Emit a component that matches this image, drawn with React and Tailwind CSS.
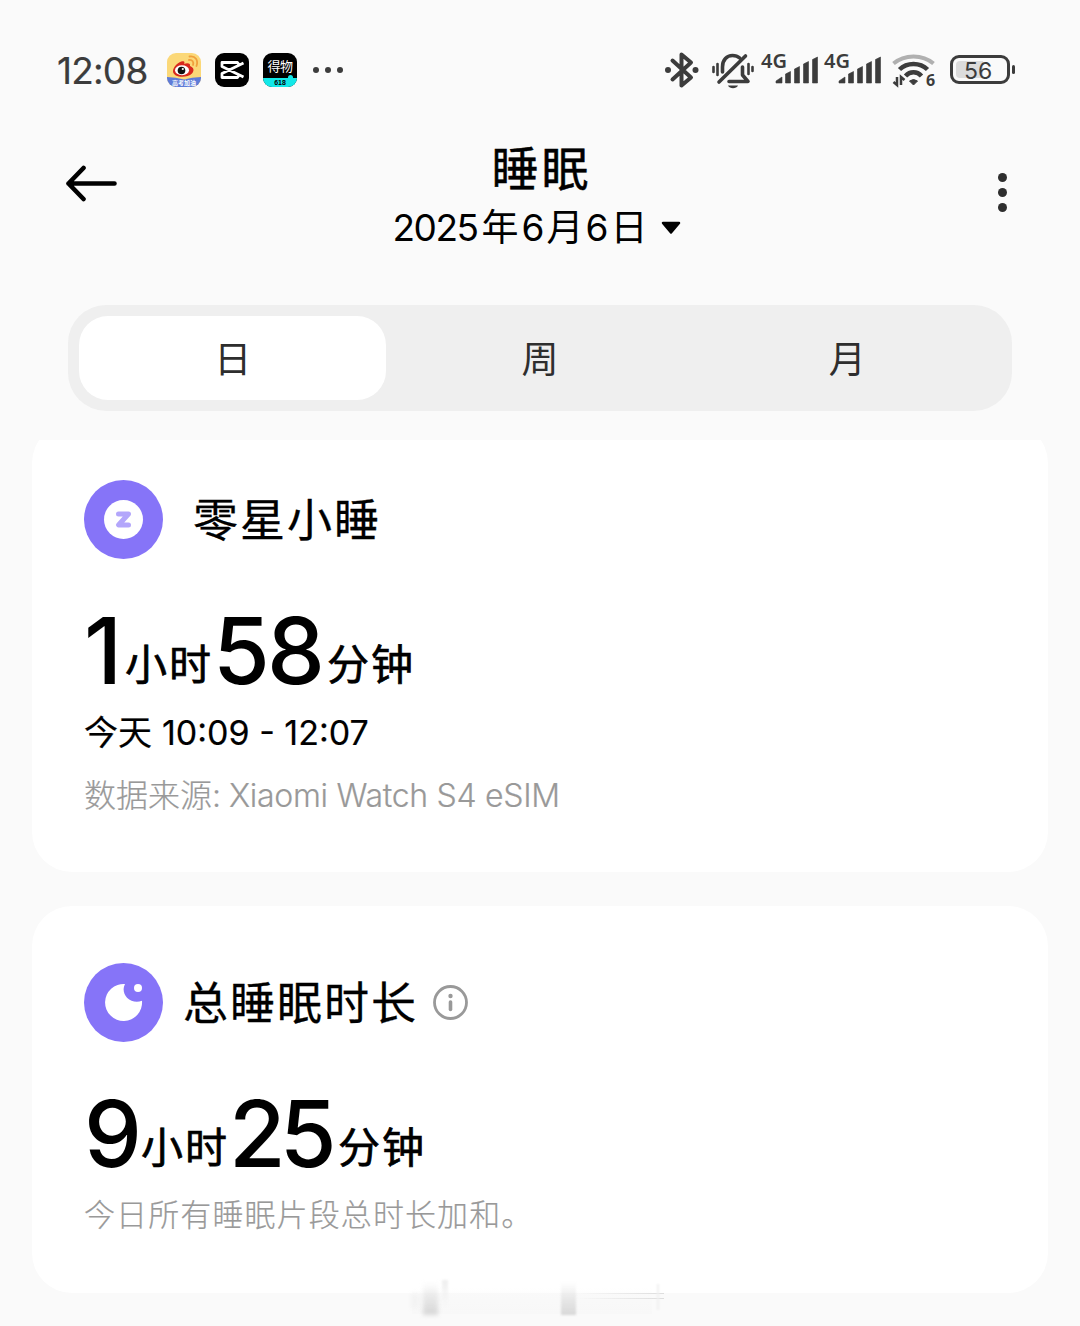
import clsx from "clsx";

const tabs = [
  { key: "day", label: "日" },
  { key: "week", label: "周" },
  { key: "month", label: "月" },
];

function BluetoothIcon() {
  return (
    <svg width="36" height="40" viewBox="0 0 36 40" className="shrink-0" fill="none" stroke="#3c3c3c" strokeWidth="4" strokeLinecap="round" strokeLinejoin="round">
      <path d="M8.500 10.500 27 27.500 17.500 35.500V4.500L27 12.500 8.500 29.500" />
      <circle cx="4" cy="20" r="3" fill="#3c3c3c" stroke="none" />
      <circle cx="31.500" cy="20" r="3" fill="#3c3c3c" stroke="none" />
    </svg>
  );
}

function MutedBellIcon() {
  return (
    <svg width="44" height="40" viewBox="0 0 44 40" className="shrink-0" fill="none" stroke="#3c3c3c" strokeWidth="3.600" strokeLinecap="round" strokeLinejoin="round">
      <path d="M11.500 22V17C11.500 9.500 16 5.500 21.500 5.500C24.500 5.500 27 6.500 28.700 8" />
      <path d="M31.500 17V25L37 31.500H18" />
      <path d="M34.500 6 8 32" />
      <path d="M17 35.500H27C25.500 39 18.500 39 17 35.500Z" fill="#3c3c3c" stroke="none" />
      <path d="M2.500 17V22M6.500 14V25M37.500 14V24M41.500 17V21" strokeWidth="2.600" />
    </svg>
  );
}

function Signal() {
  return (
    <div className="relative h-10 w-[57px] shrink-0">
      <svg width="57" height="40" viewBox="0 0 57 40" fill="#3c3c3c">
        <path d="M15 33V31L21 27V33Z M24.500 33V24L29.500 21.500V33Z M33.500 33V19L38.500 16.500V33Z M42.500 33V14L47.500 11.500V33Z M51.500 33V9.500L56.500 7V33Z" stroke="#3c3c3c" strokeWidth=".6" strokeLinejoin="round" />
      </svg>
      <span className="absolute -top-px left-0 font-['Noto_Sans'] text-[20px] font-semibold leading-[24px]">4G</span>
    </div>
  );
}

function WifiIcon() {
  return (
    <div className="relative h-10 w-[44px] shrink-0">
      <svg width="44" height="40" viewBox="0 0 44 40" fill="none">
        <path d="M1.500 13.500C12.500 4 30.500 4 41.500 13.500" stroke="#b0b0b0" strokeWidth="4" />
        <path d="M7.500 19.500C15 12 28 12 35.500 19.500" stroke="#3c3c3c" strokeWidth="4.500" />
        <path d="M13.500 26C18 21 25 21 29.500 26" stroke="#3c3c3c" strokeWidth="4.500" />
        <path d="M17.500 31Q21.500 28 25.500 31L21.500 35Z" fill="#3c3c3c" stroke="#3c3c3c" />
        <path d="M5 27V35L1.500 32M9 35V27L12.500 30" stroke="#3c3c3c" strokeWidth="2.500" />
      </svg>
      <span className="absolute left-[34px] top-[22px] font-['Noto_Sans'] text-[16px] font-bold leading-[16px]">6</span>
    </div>
  );
}

function Battery() {
  return (
    <div className="flex shrink-0 items-center gap-[2px]">
      <div className="flex h-[29px] w-[60px] rounded-[9px] border-[3px] border-[#3c3c3c] p-[3px]">
        <div className="h-full w-[27px] rounded-l-[4px] bg-[#dcdcdc]">
          <span className="ml-[8px] block w-[36px] pt-px text-[23px] leading-[18px]">56</span>
        </div>
      </div>
      <div className="h-[9px] w-[3px] rounded-full bg-[#3c3c3c]" />
    </div>
  );
}

function WeiboIcon() {
  return (
    <div className="relative size-[34px] overflow-hidden rounded-[9px] bg-[#fbd878]">
      <svg width="34" height="34" viewBox="0 0 34 34" fill="none">
        <path d="M0 24Q9 24 17 26.500Q25 24 34 24V34H0Z" fill="#5e7bd8" />
        <path d="M6 18C6 13 14 6.500 17 8.500C18 9.500 17 11 17 11C20 9.500 24 10 23 13C27 14.500 27.500 17.500 25 20.500C20 25.500 6 25 6 18Z" fill="#d8281d" />
        <ellipse cx="15" cy="17.300" rx="7" ry="5" fill="#fff" />
        <circle cx="14.500" cy="17.500" r="3.800" fill="#111" />
        <circle cx="15.800" cy="16" r="1.100" fill="#fff" />
        <path d="M22 7C25.500 6.500 27 9 26 12M22.500 3.500C28.500 2.500 31.500 7.500 29.500 13" stroke="#f0a03c" strokeWidth="1.800" strokeLinecap="round" />
      </svg>
      <span className="absolute left-[5px] top-[26px] w-[30px] text-[6px] font-bold leading-[7px] text-white">高考加油</span>
    </div>
  );
}

function CapCutIcon() {
  return (
    <svg width="34" height="34" viewBox="0 0 34 34" fill="none">
      <rect width="34" height="34" rx="9" fill="#000" />
      <path d="M28.500 10 7 20.500V24.500H22.500L24 22.500M28.500 24 7 13.500V9.500H22.500L24 11.500" stroke="#fff" strokeWidth="2.800" strokeLinejoin="round" />
    </svg>
  );
}

function DewuIcon() {
  return (
    <div className="relative size-[34px] overflow-hidden rounded-[9px] bg-black text-center">
      <span className="block pt-[5px] text-[13px] leading-[17px] tracking-[-0.5px] text-white">得物</span>
      <div className="absolute bottom-0 left-0 h-[9px] w-full bg-[#12e8e8] font-['Liberation_Sans'] text-[7px] font-bold leading-[9px] text-black">618</div>
      <div className="absolute right-[4px] top-[22px] h-[5px] w-[5px] rounded-full bg-[#12e8e8]" />
    </div>
  );
}

function StatusBar() {
  return (
    <div className="flex h-[92px] items-end justify-between pl-[57px] pr-[65px] text-[#3c3c3c]">
      <div className="flex h-[44px] items-center">
        <span className="w-[110px] pt-[2px] text-[37px] leading-[44px] tracking-[-0.8px] [-webkit-text-stroke:0.2px_#3c3c3c]">12:08</span>
        <div className="flex gap-[14px]">
          <WeiboIcon />
          <CapCutIcon />
          <DewuIcon />
        </div>
        <div className="ml-[16px] flex gap-[6px]">
          <i className="size-[6px] rounded-full bg-[#3c3c3c]" />
          <i className="size-[6px] rounded-full bg-[#3c3c3c]" />
          <i className="size-[6px] rounded-full bg-[#3c3c3c]" />
        </div>
      </div>
      <div className="flex h-[45px] items-center">
        <BluetoothIcon />
        <div className="ml-[11px] mr-[6px] flex"><MutedBellIcon /></div>
        <div className="mr-[11px] flex gap-[6px]">
          <Signal />
          <Signal />
        </div>
        <WifiIcon />
        <div className="ml-[14px]"><Battery /></div>
      </div>
    </div>
  );
}

function Header() {
  return (
    <header className="flex h-[213px] justify-between px-[66px] pt-[48px]">
      <button className="mt-[23px] h-[40px] w-[60px]">
        <svg width="52" height="38" viewBox="0 0 52 38" fill="none" stroke="#000" strokeWidth="4.600" strokeLinecap="round" strokeLinejoin="round">
          <path d="M17.500 4 2.500 19.500 17.500 35M2.500 19.500H48.500" />
        </svg>
      </button>
      <div className="flex flex-col items-center">
        <h1 className="pl-[3px] text-[47px] leading-[58px] tracking-[3px] [-webkit-text-stroke:0.5px_#000]">睡眠</h1>
        <div className="flex h-[60px] items-center pr-[7px] text-[37px]">
          <span className="w-[89px] tracking-[-1.500px]">2025</span>
          <span className="w-[40px]">年</span>
          <span className="w-[25px]">6</span>
          <span className="w-[39px]">月</span>
          <span className="w-[25px]">6</span>
          <span className="w-[50px]">日</span>
          <svg width="20" height="14" viewBox="0 0 20 14">
            <path d="M2 2H18L10 11.500Z" stroke="#000" strokeWidth="2.500" strokeLinejoin="round" />
          </svg>
        </div>
      </div>
      <button className="mt-[33px] flex h-[40px] w-[60px] flex-col items-end gap-[6px] pr-[7px]">
        <i className="size-[9px] rounded-full bg-[#2e2e2e]" />
        <i className="size-[9px] rounded-full bg-[#2e2e2e]" />
        <i className="size-[9px] rounded-full bg-[#2e2e2e]" />
      </button>
    </header>
  );
}

function Duration({ hours, minutes, hoursClass, minutesClass }) {
  return (
    <div className="flex h-[96px] items-end">
      <span className={clsx("text-[92px] font-medium leading-[96px]", hoursClass)}>{hours}</span>
      <span className="text-[42px] leading-[69px] tracking-[2px] [-webkit-text-stroke:0.7px_#000]">小时</span>
      <span className={clsx("text-[92px] font-medium leading-[96px]", minutesClass)}>{minutes}</span>
      <span className="text-[42px] leading-[69px] tracking-[2px] [-webkit-text-stroke:0.7px_#000]">分钟</span>
    </div>
  );
}

export default function App() {
  const active = "day";

  return (
    <div className="relative h-[1326px] w-[1080px] overflow-hidden bg-[#fafafa] font-[Inter,'Noto_Sans_CJK_SC',sans-serif] text-black">
      <StatusBar />
      <Header />

      <nav className="mx-[68px] grid h-[106px] grid-cols-3 rounded-[38px] bg-[#efefef] p-[11px]">
        {tabs.map((tab) => (
          <button
            key={tab.key}
            className={clsx(
              "rounded-[29px] pt-[4px] text-[37px] leading-[80px] text-[#2e2e2e]",
              tab.key === active && "bg-white"
            )}
          >
            {tab.label}
          </button>
        ))}
      </nav>

      {/* scroll area, first card is partly scrolled under the tabs */}
      <main className="mt-[29px] h-[886px] overflow-hidden px-[32px]">
        <section className="-mt-[17px] h-[449px] rounded-[40px] bg-white px-[52px] pt-[57px]">
          <div className="flex items-center">
            <svg width="79" height="79" viewBox="0 0 79 79">
              <circle cx="39.500" cy="39.500" r="39.500" fill="#8674f8" />
              <circle cx="39.500" cy="39.500" r="19.500" fill="#fff" />
              <path d="M34.500 34H44.500L34.500 45H44.500" fill="none" stroke="#b3a6fb" strokeWidth="5" strokeLinecap="round" strokeLinejoin="round" />
            </svg>
            <h2 className="ml-[30px] pt-[3px] text-[45px] leading-[60px] tracking-[2px] [-webkit-text-stroke:0.3px_#000]">零星小睡</h2>
          </div>
          <div className="mt-[44px]">
            <Duration hours="1" minutes="58" hoursClass="w-[41px]" minutesClass="w-[114px] tracking-[-3px]" />
          </div>
          <p className="mt-[8px] flex text-[34px] leading-[52px] [-webkit-text-stroke:0.2px_#000]">
            <span className="w-[78px]">今天</span>
            <span>10:09 - 12:07</span>
          </p>
          <p className="mt-[11px] flex text-[32px] font-light leading-[52px] text-[#999] [-webkit-text-stroke:0.2px_#999]">
            <span className="w-[145px]">数据来源:</span>
            <span className="tracking-[-0.3px]">Xiaomi Watch S4 eSIM</span>
          </p>
        </section>

        <section className="mt-[34px] h-[387px] rounded-[40px] bg-white px-[52px] pt-[57px]">
          <div className="flex items-center">
            <svg width="79" height="79" viewBox="0 0 79 79">
              <circle cx="39.500" cy="39.500" r="39.500" fill="#8674f8" />
              <path d="M41 21C38.500 25.500 39.500 31 43 34.700C47 38.500 52.500 39.700 58 37.800A18.500 18.500 0 1 1 41 21Z" fill="#fff" />
              <circle cx="54" cy="25" r="4" fill="#fff" />
            </svg>
            <h2 className="ml-[20px] pt-[3px] text-[45px] leading-[60px] tracking-[2px] [-webkit-text-stroke:0.3px_#000]">总睡眠时长</h2>
            <svg width="35" height="35" viewBox="0 0 35 35" className="ml-[15px]">
              <circle cx="17.500" cy="17.500" r="16" fill="none" stroke="#999" strokeWidth="2.800" />
              <circle cx="17.500" cy="11" r="2.200" fill="#999" />
              <path d="M17.500 17V24.500" stroke="#999" strokeWidth="3.600" strokeLinecap="round" />
            </svg>
          </div>
          <div className="mt-[44px]">
            <Duration hours="9" minutes="25" hoursClass="w-[57px]" minutesClass="w-[109px] tracking-[-6px]" />
          </div>
          <p className="mt-[7px] text-[31px] font-light leading-[52px] tracking-[1.1px] text-[#999] [-webkit-text-stroke:0.2px_#999]">今日所有睡眠片段总时长加和。</p>
        </section>
      </main>

      {/* faint smudge over the bottom edge of the last card */}
      <div className="pointer-events-none absolute left-[412px] top-[1278px] h-[40px] w-[252px]">
        <div className="absolute left-0 top-[10px] h-[26px] w-[240px] bg-gradient-to-b from-transparent to-[#f8f8f8]" />
        <div className="absolute left-0 top-[16px] h-[14px] w-[6px] bg-[#f1f1f1] blur-[2px]" />
        <div className="absolute left-[11px] top-[4px] h-[33px] w-[15px] bg-gradient-to-b from-transparent to-[#d6d6d6] blur-[2px]" />
        <div className="absolute left-[30px] top-[2px] h-[28px] w-[6px] bg-gradient-to-b from-[#eeeeee] to-transparent blur-[1px]" />
        <div className="absolute left-[149px] top-[4px] h-[33px] w-[15px] bg-gradient-to-b from-transparent to-[#d8d8d8] blur-[1px]" />
        <div className="absolute left-[164px] top-[15px] h-px w-[88px] bg-gradient-to-r from-transparent to-[#dddddd]" />
        <div className="absolute left-[164px] top-[20px] h-px w-[88px] bg-gradient-to-r from-transparent to-[#dddddd]" />
        <div className="absolute left-[245px] top-[6px] h-[26px] w-[2px] bg-[#f0f0f0] blur-[1px]" />
      </div>
    </div>
  );
}
